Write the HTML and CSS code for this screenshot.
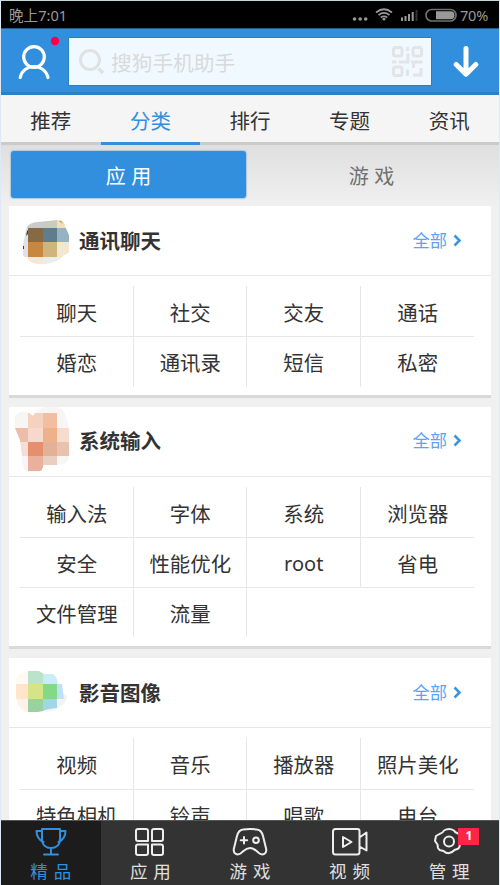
FILE: index.html
```html
<!DOCTYPE html>
<html lang="zh-CN">
<head>
<meta charset="utf-8">
<title>搜狗手机助手</title>
<link rel="stylesheet" href="styles.css">
</head>
<body>
<div class="app">
  <div class="status">
    <span class="time">晚上7:01</span>
    <svg class="sysicons" width="107" height="26" viewBox="0 0 107 26">
      <g fill="#999"><circle cx="3.500" cy="17" r="1.800"/><circle cx="9.200" cy="17" r="1.800"/><circle cx="14.700" cy="17" r="1.800"/><circle cx="33" cy="17" r="1.600"/>
      <path d="M50 15.500h2V19h-2zM53.500 14h2v5h-2zM57 12h2v7h-2zM60.700 10h2v9h-2z"/></g>
      <path d="M64.500 8h2v11h-2z" fill="#333"/>
      <g fill="none" stroke="#999" stroke-width="1.700"><path d="M25 10.500q8-6.500 16 0M27.500 13.200q5.500-4.500 11 0M29.800 15.500q3.200-2.500 6.400 0"/></g>
      <rect x="75" y="7.500" width="30" height="11.500" rx="5.700" fill="none" stroke="#707070" stroke-width="1.700"/>
      <path d="M85 9.200h14.500a4 4 0 0 1 0 8H85z" fill="#999"/>
    </svg>
    <span class="battery">70%</span>
  </div>
  <header class="top">
    <div class="user">
      <svg width="42" height="44" viewBox="0 0 42 44"><g fill="none" stroke="#fff" stroke-width="3.200" stroke-linecap="round"><circle cx="20" cy="20" r="10.300"/><path d="M6.200 40.500C8 33 14 29.700 20 29.700S32 33 34 40.500"/></g><circle cx="41" cy="4" r="4.200" fill="#ff0048"/></svg>
    </div>
    <div class="search">
      <svg width="26" height="26" viewBox="0 0 26 26"><g fill="none" stroke="#e0e1e2" stroke-width="3"><circle cx="11" cy="11" r="9.500"/><path d="M19.500 19.500l4.500 4.500" stroke-width="3.500"/></g></svg>
      <span class="hint">搜狗手机助手</span>
      <svg width="31" height="31" viewBox="0 0 31 31"><g fill="none" stroke="#e3e4e5" stroke-width="3"><rect x="1.500" y="1.500" width="8.500" height="8.500" rx="2"/><rect x="21" y="1.500" width="8.500" height="8.500" rx="2"/><rect x="1.500" y="21" width="8.500" height="8.500" rx="2"/><path d="M15.500 1v4M16 7.500v8.500H7M0 16h4.500M19 16h11.500M21.500 15v7M30.500 29H21M29 30v-8M15.500 23.500V30"/></g></svg>
    </div>
    <div class="download"><svg width="26" height="32" viewBox="0 0 26 32"><path d="M13 2.500V28M3.200 18.500L13 28.200l9.800-9.700" fill="none" stroke="#fff" stroke-width="5" stroke-linecap="round" stroke-linejoin="round"/></svg></div>
  </header>
  <nav class="tabs"><span>推荐</span><span class="on">分类</span><span>排行</span><span>专题</span><span>资讯</span></nav>
  <div class="segment"><span class="on">应 用</span><span>游 戏</span></div>
  <main class="list">
    <section class="card">
      <div class="head">
        <svg class="icon" width="60" height="68" viewBox="9 207 60 68">
          <clipPath id="c1"><path d="M23 246l3-17q3-7 12-7l20-2q6-1 7 6l7 16q1 11-8 13-5 7-18 9-16 1-18-5l-5-3z"/></clipPath>
          <g clip-path="url(#c1)" shape-rendering="crispEdges"><path fill="#c8cacc" d="M20 218h23v10H20z"/><path fill="#c7ccbd" d="M43 218h14v10H43z"/><path fill="#efe0bd" d="M57 218h9v10h-9z"/><path fill="#dfe1e6" d="M20 228h8v29h-8z"/><path fill="#846b45" d="M28 228h15v14H28z"/><path fill="#5f7d8c" d="M43 228h14v14H43z"/><path fill="#97b2c1" d="M57 228h16v14H57z"/><path fill="#c9863f" d="M28 242h15v15H28z"/><path fill="#d0b47e" d="M43 242h14v15H43z"/><path fill="#f2e8d1" d="M57 242h16v15H57z"/><path fill="#f2e7d8" d="M28 257h15v9H28z"/><path fill="#ebecec" d="M43 257h20v9H43z"/></g>
          <path d="M26 236l1-5 1-1v4zM23 246h1v3h-1z" fill="#403a50"/><path d="M59 221h2l2 3z" fill="#c9863f"/>
        </svg>
        <h2>通讯聊天</h2><span class="all">全部<svg width="9" height="13" viewBox="0 0 9 13"><path d="M1.500 1.500l5 5-5 5" fill="none" stroke="#3a97dc" stroke-width="2.600"/></svg></span>
      </div>
      <div class="grid"><span>聊天</span><span>社交</span><span>交友</span><span>通话</span><span>婚恋</span><span>通讯录</span><span>短信</span><span>私密</span></div>
    </section>
    <section class="card">
      <div class="head">
        <svg class="icon" width="60" height="68" viewBox="9 407 60 68">
          <clipPath id="c2"><path d="M15 417q3-7 13-5l5 4q7-11 22-10 10 2 13 17l2 10v17q0 8-4 13l-9 2H44l-3 6H26q-5-5-4-15l-2-16-5-12z"/></clipPath>
          <g clip-path="url(#c2)" shape-rendering="crispEdges"><path fill="#f8f6f5" d="M10 405h62v75H10z"/><path fill="#f5d1c0" d="M28 413h15v15H28z"/><path fill="#f2bea1" d="M43 413h14v15H43z"/><path fill="#edbda9" d="M10 428h18v14H10z"/><path fill="#f7d8cc" d="M28 428h15v14H28z"/><path fill="#edb18c" d="M43 428h14v14H43z"/><path fill="#f6dccf" d="M57 428h15v14H57z"/><path fill="#f5ded6" d="M10 442h18v14H10z"/><path fill="#e58f6c" d="M28 442h15v14H28z"/><path fill="#e3b197" d="M43 442h14v14H43z"/><path fill="#e7c2ad" d="M57 442h15v14H57z"/><path fill="#e8b09d" d="M28 456h15v15H28z"/><path fill="#ebcec2" d="M43 456h14v9H43z"/></g>
        </svg>
        <h2>系统输入</h2><span class="all">全部<svg width="9" height="13" viewBox="0 0 9 13"><path d="M1.500 1.500l5 5-5 5" fill="none" stroke="#3a97dc" stroke-width="2.600"/></svg></span>
      </div>
      <div class="grid"><span>输入法</span><span>字体</span><span>系统</span><span>浏览器</span><span>安全</span><span>性能优化</span><span class="latin">root</span><span>省电</span><span>文件管理</span><span>流量</span><span class="blank"></span><span></span></div>
    </section>
    <section class="card">
      <div class="head">
        <svg class="icon" width="60" height="68" viewBox="9 659 60 68">
          <path d="M46 711l18-17q3 1 3 4-1 5-8 9-6 5-16 5z" fill="#f3f3f3"/>
          <clipPath id="c3"><path d="M16 680q2-7 12-9h11l5 3h8q5 1 6 10h4l2 15h-7v9l-8 1-6 2-5 1H26q-9-4-10-15z"/></clipPath>
          <g clip-path="url(#c3)" shape-rendering="crispEdges"><path fill="#fff9f3" d="M10 668h18v16H10z"/><path fill="#bbe2ca" d="M28 668h15v16H28z"/><path fill="#c9ecf8" d="M43 668h17v16H43z"/><path fill="#ffe5cb" d="M10 684h18v15H10z"/><path fill="#d7e389" d="M28 684h15v15H28z"/><path fill="#83d985" d="M43 684h14v15H43z"/><path fill="#bde2f8" d="M57 684h9v15h-9z"/><path fill="#fff1e5" d="M10 699h18v14H10z"/><path fill="#99d2a0" d="M28 699h15v14H28z"/><path fill="#a1d7e4" d="M43 699h17v14H43z"/></g>
        </svg>
        <h2>影音图像</h2><span class="all">全部<svg width="9" height="13" viewBox="0 0 9 13"><path d="M1.500 1.500l5 5-5 5" fill="none" stroke="#3a97dc" stroke-width="2.600"/></svg></span>
      </div>
      <div class="grid"><span>视频</span><span>音乐</span><span>播放器</span><span>照片美化</span><span>特色相机</span><span>铃声</span><span>唱歌</span><span>电台</span></div>
    </section>
  </main>
  <nav class="bottom">
    <div class="item on"><svg width="34" height="32" viewBox="0 0 34 32"><path d="M8 3h18v10c0 6-4 9-9 9s-9-3-9-9zM8 5H2.500c0 6 2.500 9 7 11M26 5h5.500c0 6-2.500 9-7 11M17 22v6M10 28.500h14" /></svg><span>精 品</span></div>
    <div class="item"><svg width="34" height="32" viewBox="0 0 34 32"><path d="M5 3h8q2 0 2 2v10H5q-2 0-2-2V5q0-2 2-2zM21 3h7q2 0 2 2v8q0 2-2 2h-9V5q0-2 2-2zM5 18.500h10v8.500q0 2-2 2H5q-2 0-2-2v-6.500q0-2 2-2zM19 18.500h9q2 0 2 2v6.500q0 2-2 2h-7q-2 0-2-2z"/></svg><span>应 用</span></div>
    <div class="item"><svg width="38" height="32" viewBox="0 0 38 32"><path d="M12 3.500Q19 2.500 26 3.500 30.500 4 32 10l3.200 13c.8 5-3.700 6.500-6.700 4.500C25 25 23.500 22 19 22s-6 3-9.500 5.500c-3 2-7.500.5-6.700-4.500L6 10Q7.500 4 12 3.500zM13 11v6.500M9.700 14.200h6.500"/><circle cx="25" cy="14.200" r="2.800"/></svg><span>游 戏</span></div>
    <div class="item"><svg width="38" height="32" viewBox="0 0 38 32"><path d="M4.500 3h22q2 0 2 2v21q0 2.500-2.500 2.500H4.500Q2 28.500 2 26V5.500Q2 3 4.500 3zM12 11v10l8.500-5zM28.500 11.500l7-5v18l-7-4"/></svg><span>视 频</span></div>
    <div class="item manage"><svg width="34" height="32" viewBox="0 0 34 32"><path d="M12 4.500q5-3 10 0 1 2 3 2.500l3 1.500q1.500 3 2 6l-2 3q0 3-1.500 5l-4 1.500q-5.500 6-11 1l-4-1-1.500-2-.5-3.500L3 15l1-5 3.500-2q3.500-1 4.500-3.500z"/><circle cx="17" cy="15.500" r="5"/></svg><span>管 理</span><b>1</b></div>
  </nav>
</div>
</body>
</html>
```
FILE: styles.css
```css
* { box-sizing: border-box; }
body { margin: 0; font-family: "Noto Sans CJK SC", sans-serif; color: #333; }
.app { width: 500px; height: 885px; display: flex; flex-direction: column; overflow: hidden; background: #f0f0f0; border: 1px solid #dfe9f5; border-top-color: #c5d8dc; border-bottom: 0; }
svg { display: block; flex: none; }
.status { flex: none; height: 27px; background: #000; color: #999; display: flex; align-items: center; padding: 0 9px 0 8px; font-size: 14px; }
.time { flex: 1; font-family: "Noto Sans", "Noto Sans CJK SC", sans-serif; font-size: 14.6px; }
.battery { width: 30px; margin-left: 2px; font-family: "Noto Sans", sans-serif; font-size: 14.5px; letter-spacing: -.2px; }
.top { flex: none; height: 67px; display: flex; background: #318fdd; border-top: 1px solid #235c8c; border-bottom: 3px solid #2981ca; }
.user { width: 67px; padding: 8px 0 0 13px; }
.user svg { overflow: visible; }
.search { width: 364px; height: 49px; margin-top: 8px; display: flex; align-items: center; padding: 0 8px 0 10px; background: #f0f9ff; border: 1px solid #2780c8; }
.hint { flex: 1; margin-left: 6px; font-size: 20.7px; line-height: 40px; color: #d9dadb; }
.download { flex: 1; padding: 17px 0 0 21px; }
.tabs { flex: none; height: 50px; display: flex; background: #f5f5f5; border-bottom: 3px solid #cbcbcb; font-size: 20.5px; }
.tabs span { flex: 1; height: 50px; line-height: 50px; text-align: center; }
.tabs .on { color: #318fdd; border-bottom: 3px solid #318fdd; }
.segment { flex: none; height: 61px; display: flex; background: linear-gradient(#dfdfdf, #f0f0f0); padding: 6px 2px 8px 10px; font-size: 20px; }
.segment span { flex: 1; height: 47px; line-height: 49px; text-align: center; color: #717171; word-spacing: 1px; }
.segment span.on { flex: 0 0 235px; background: #318fdd; color: #fff; border-radius: 3px; box-shadow: 0 0 1px 1px #acc9df; }
.list { flex: 1; min-height: 0; overflow: hidden; padding: 0 8px; display: flex; flex-direction: column; gap: 9px; }
.card { flex: none; background: #fff; padding-bottom: 8px; border-bottom: 3px solid #d9d9d9; }
.card:nth-child(2) { padding-bottom: 9px; }
.head { height: 70px; display: flex; align-items: center; border-bottom: 1px solid #e7e7e7; padding: 0 29px 0 0; }
.head h2 { flex: 1; margin: 0 0 2px 10px; font-size: 20.5px; line-height: 30px; font-weight: 700; }
.all { display: flex; align-items: center; gap: 6px; margin-bottom: 2px; color: #5aa3f7; font-size: 17.3px; line-height: 28px; }
.all svg { margin-top: 1px; }
.grid { display: grid; grid-template-columns: repeat(4, 113.5px); grid-auto-rows: 50.3px; padding: 10px 0 0 11px; font-size: 20.4px; }
.grid span { text-align: center; line-height: 53px; white-space: nowrap; border-right: 1px solid #e7e7e7; padding-left: 1px; }
.grid span:nth-child(4n), .grid .blank { border-right: 0; }
.grid span:nth-child(n+5) { border-top: 1px solid #e7e7e7; line-height: 51px; }
.grid .latin { font-family: "Noto Sans", sans-serif; font-size: 20px; }
.bottom { flex: none; height: 65px; display: flex; background: #333; border-top: 1px solid #555; }
.item { flex: 1; display: flex; flex-direction: column; align-items: center; padding-top: 5px; color: #e0e0e0; font-size: 17.5px; word-spacing: 2px; position: relative; }
.item svg { fill: none; stroke: #eee; stroke-width: 2; stroke-linejoin: round; stroke-linecap: round; }
.item span { line-height: 25px; white-space: nowrap; }
.item.on { background: #1c1c1c; color: #318fdd; }
.item.on svg { stroke: #318fdd; }
.item b { position: absolute; left: 59px; top: 7px; width: 21px; height: 17px; background: #ff2547; color: #fff; font: bold 12px/16px "Noto Sans", sans-serif; text-align: center; }
```
